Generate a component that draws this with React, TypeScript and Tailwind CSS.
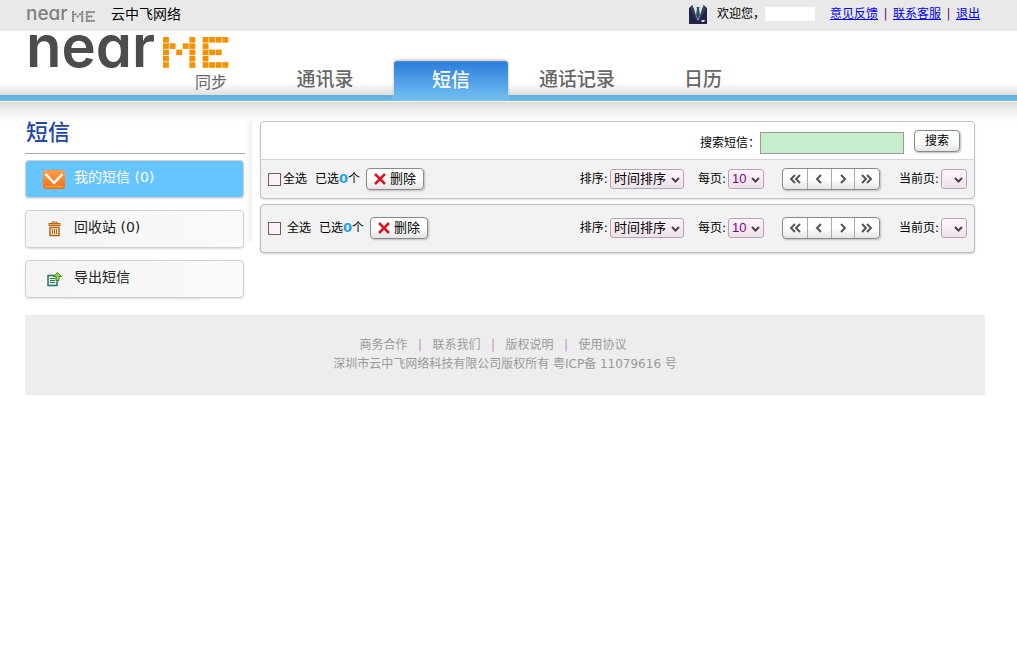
import type { ReactNode } from "react";

const navItems = ["通讯录", "短信", "通话记录", "日历"];

const accountLinks = ["意见反馈", "联系客服", "退出"];

const footerLinks = ["商务合作", "联系我们", "版权说明", "使用协议"];

// dot grid for the orange half of the logo
const dots = ["#...#.####", "##.##.#...", "#.#.#.###.", "#...#.#...", "#...#.####"];

const button =
  "flex h-[22px] items-center rounded border border-[#8a8a8a] bg-linear-to-b from-white from-50% to-[#e4e4e4] text-black shadow-[1px_1px_2px_#bbb]";

function DotMark({ className }: { className: string }) {
  return (
    <svg viewBox="0 0 66 31" className={className} fill="currentColor" aria-label="ME">
      {dots.flatMap((row, y) =>
        row
          .split("")
          .map((c, x) => (c === "#" ? <rect key={`${x}-${y}`} x={x * 6.6} y={y * 6.3} width="5.9" height="5.6" /> : null))
      )}
    </svg>
  );
}

function SuitIcon() {
  return (
    <svg viewBox="0 0 18 20" className="h-5 w-[18px]">
      <path d="M0 20V4L5 0h8l5 4v16z" fill="#20234a" />
      <path d="M4 0h10l1 4-6 13L3 4z" fill="#dfe6ea" />
      <path d="M3 1 1 5l8 13L5 5zM15 1l2 4-8 13 4-13z" fill="#383d5c" />
      <path d="M7.500 3h3l-.5 2 1 6-2 5-2-5 1-6z" fill="#24565e" />
      <path d="M12 16h4l-1 2h-2z" fill="#d5d8e4" />
    </svg>
  );
}

function MailIcon() {
  return (
    <svg viewBox="0 0 22 19" className="h-[19px] w-[22px]">
      <defs>
        <linearGradient id="mail" x1="0" y1="0" x2="0" y2="1">
          <stop offset="0" stopColor="#ffa04c" />
          <stop offset="1" stopColor="#f26c12" />
        </linearGradient>
      </defs>
      <rect width="22" height="19" rx="3" fill="url(#mail)" />
      <path d="M2 16.500h18" stroke="#ffa526" strokeWidth="1.500" />
      <path d="m2.500 4 8.500 9 8.500-9" fill="none" stroke="#fff" strokeWidth="2.500" />
    </svg>
  );
}

function TrashIcon() {
  return (
    <svg viewBox="0 0 13 16" className="h-4 w-[13px]" fill="none" stroke="#b8651b">
      <path d="M4 2.500V1h5v1.500" />
      <rect x="1" y="2.500" width="11" height="2" fill="#f5a541" />
      <path d="M2 6.500h9v8H2z" fill="#fff0d0" strokeWidth="1.500" />
      <path d="M4.500 8v5M6.500 8v5M8.500 8v5" />
    </svg>
  );
}

function ExportIcon() {
  return (
    <svg viewBox="0 0 15 15" className="h-[15px] w-[15px]">
      <path d="M1 3.500h9v10H1z" fill="#e2f2ec" stroke="#267564" strokeWidth="1.500" />
      <path d="M3 6.500h5M3 8.500h5M3 10.500h5" stroke="#267564" />
      <path d="m10.500.5 4 4h-2.500v4H9v-4H6.500z" fill="#8fd04c" stroke="#4b8a25" />
    </svg>
  );
}

function SelectBox({ label, options, width, className }: { label: string; options: string[]; width: string; className?: string }) {
  return (
    <label className={`flex items-center gap-[2px] ${className ?? ""}`}>
      {label}:
      <span className="relative flex">
        <select
          className={`h-5 ${width} appearance-none rounded-[3px] border border-[#b5a5b1] bg-linear-to-b from-[#fff4fd] to-[#eee2ea] pl-[3px] font-['Liberation_Sans','Noto_Sans_CJK_SC',sans-serif] text-[13px] leading-4`}
        >
          {options.map((o) => (
            <option key={o}>{o}</option>
          ))}
        </select>
        <svg viewBox="0 0 9 6" className="pointer-events-none absolute top-2 right-[4px] h-[6px] w-[9px]">
          <path d="m1 1 3.500 3.500L8 1" fill="none" stroke="#4a434a" strokeWidth="2" />
        </svg>
      </span>
    </label>
  );
}

const arrows = [
  { label: "首页", d: "M6 1 2 5l4 4M11 1 7 5l4 4", width: "w-[25px]" },
  { label: "上一页", d: "M8 1 4 5l4 4", width: "w-6" },
  { label: "下一页", d: "m4 1 4 4-4 4", width: "w-[23px]" },
  { label: "末页", d: "m1 1 4 4-4 4M6 1l4 4-4 4", width: "w-6" },
];

function Pager() {
  return (
    <div className={`${button} mr-[19px] ml-[18px] divide-x divide-[#aaa]`}>
      {arrows.map((a) => (
        <button key={a.label} aria-label={a.label} className={`flex h-full items-center justify-center ${a.width}`}>
          <svg viewBox="0 0 12 10" className="h-[10px] w-3">
            <path d={a.d} fill="none" stroke="#555" strokeWidth="2" />
          </svg>
        </button>
      ))}
    </div>
  );
}

function Toolbar({ labelGap }: { labelGap: string }) {
  return (
    <div className="flex items-center px-[7px] whitespace-nowrap">
      <label className={`flex items-center ${labelGap}`}>
        <input type="checkbox" className="h-[13px] w-[13px] appearance-none border border-[#6b5c66] bg-[#fdf1f9]" />
        全选
      </label>
      <span className="mr-[6px] ml-2 flex items-center">
        已选<b className="text-[13px] text-[#1c9fec]">0</b>个
      </span>
      <button className={`${button} gap-1 px-[7px] text-[13px]`}>
        <svg viewBox="0 0 12 12" className="h-3 w-3">
          <path d="m1 1 10 10M11 1 1 11" stroke="#d9141b" strokeWidth="2.500" />
        </svg>
        删除
      </button>
      <div className="ml-auto flex items-center">
        <SelectBox label="排序" options={["时间排序"]} width="w-[74px]" />
        <SelectBox label="每页" options={["10"]} width="w-9 text-[#800080]" className="ml-[14px]" />
        <Pager />
        <SelectBox label="当前页" options={[]} width="w-[26px]" />
      </div>
    </div>
  );
}

function SideItem({ icon, active, children }: { icon: ReactNode; active?: boolean; children: ReactNode }) {
  return (
    <a
      href="#"
      className={`flex h-[38px] items-center rounded border border-[#d0d0d0] pb-1 pl-[17px] text-sm shadow-[0_1px_2px_#ddd] ${
        active ? "bg-[#66c5ff] text-white" : "bg-linear-to-r from-[#f4f4f4] to-[#fafafa] text-[#222]"
      }`}
    >
      <span className="mr-[9px] flex w-[22px] justify-center pt-1">{icon}</span>
      {children}
    </a>
  );
}

export default function App() {
  return (
    <div className="min-h-screen bg-white font-['DejaVu_Sans','Noto_Sans_CJK_SC',sans-serif] text-xs text-black">
      <div className="flex h-[31px] items-center bg-[#e9e9e9] pr-[37px] pb-1 pl-[26px]">
        <div className="flex w-[69px] items-center justify-between pt-px text-[#808080]">
          <span className="font-['Inter'] text-[19px] leading-4 font-medium [font-feature-settings:'cv11']">near</span>
          <DotMark className="mt-1 h-[11px] w-[23px]" />
        </div>
        <span className="ml-4 text-sm">云中飞网络</span>
        <div className="ml-auto flex items-center">
          <SuitIcon />
          <span className="ml-[10px]">欢迎您，</span>
          <span className="mr-[15px] h-[14px] w-[50px] bg-white" />
          {accountLinks.map((link, i) => (
            <span key={link} className="flex">
              {i > 0 && <span className="w-[15px] text-center text-[#800080]">|</span>}
              <a href="#" className="text-[#0000ee] underline">
                {link}
              </a>
            </span>
          ))}
        </div>
      </div>

      <header className="flex h-[70px] bg-[linear-gradient(#fff_52px,#dedede_64px,#63acdb_64px,#6fbbe9_70px)] pl-[26px]">
        <div className="flex w-[236px] shrink-0 flex-col">
          <div className="flex h-[42px] text-[#4d4b4c]">
            <span className="w-[137px] font-['Inter'] text-[58px] leading-[30px] font-semibold [font-feature-settings:'cv11']">near</span>
            <DotMark className="mt-[6px] h-[31px] w-[66px] text-[#f39200]" />
          </div>
          <span className="pl-[169px] text-base leading-5 text-[#666]">同步</span>
        </div>
        <nav className="flex items-end">
          {navItems.map((item) => (
            <a
              key={item}
              href="#"
              className={`mx-[6px] flex h-10 w-[114px] justify-center pt-1 text-[19px] leading-7 font-medium ${
                item === "短信"
                  ? "rounded-t-[3px] border-t border-[#4a8edb] bg-linear-to-b from-[#2c7edb] to-[#74c1f2] text-white shadow-[0_-1px_3px_#bbb]"
                  : "text-[#666]"
              }`}
            >
              {item}
            </a>
          ))}
        </nav>
      </header>

      <div className="mt-px bg-[linear-gradient(#d9dadc,#f3f3f3_10px,#fff_20px)] bg-no-repeat pt-[19px] pr-8 pl-[25px]">
        <div className="flex pr-[10px]">
          <aside className="w-[227px] shrink-0 bg-[linear-gradient(to_left,#f0f0f0,#fff_7px)] bg-[length:100%_120px] bg-no-repeat pr-[7px]">
            <h1 className="h-[33px] border-b border-[#aaa] pl-px text-[22px] leading-6 font-medium text-[#2147a3]">短信</h1>
            <nav className="mt-[6px] mr-px flex flex-col gap-3">
              <SideItem icon={<MailIcon />} active>
                我的短信 (0)
              </SideItem>
              <SideItem icon={<TrashIcon />}>回收站 (0)</SideItem>
              <SideItem icon={<ExportIcon />}>导出短信</SideItem>
            </nav>
          </aside>

          <main className="ml-2 flex min-w-0 flex-1 flex-col gap-[5px]">
            <section className="rounded border border-[#c4c4c4] bg-[#f2f2f2] shadow-[0_1px_2px_#ddd]">
              <form className="flex h-[38px] items-center justify-end rounded-t border-b border-[#d5d5d5] bg-white pr-[14px]">
                <label htmlFor="search" className="pt-1">
                  搜索短信：
                </label>
                <input id="search" className="mt-1 h-[22px] w-36 border border-[#999] bg-[#c7edcc] px-1" />
                <button type="button" className={`${button} ml-[10px] px-[10px]`}>
                  搜索
                </button>
              </form>
              <div className="py-2">
                <Toolbar labelGap="gap-[2px]" />
              </div>
            </section>
            <section className="rounded border border-[#bdbdbd] bg-[#f2f2f2] pt-3 pb-[13px] shadow-[0_1px_2px_#ccc]">
              <Toolbar labelGap="gap-[6px]" />
            </section>
          </main>
        </div>

        <footer className="mt-[17px] h-20 bg-[#ededed] pt-[21px] text-center leading-[19px] text-[#999]">
          <div className="flex justify-center pr-6">
            {footerLinks.map((link, i) => (
              <span key={link} className="flex">
                {i > 0 && <span className="w-[25px] text-[#c08fc0]">|</span>}
                <a href="#">{link}</a>
              </span>
            ))}
          </div>
          <p>深圳市云中飞网络科技有限公司版权所有 粤ICP备 11079616 号</p>
        </footer>
      </div>
    </div>
  );
}
